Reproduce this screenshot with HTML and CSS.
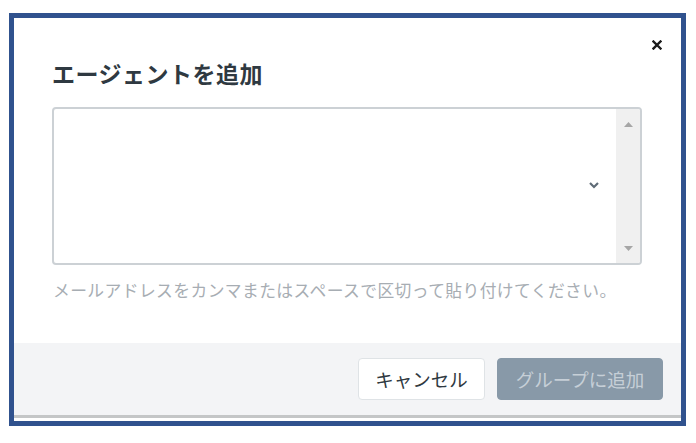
FILE: index.html
```html
<!DOCTYPE html>
<html lang="ja">
<head>
<meta charset="utf-8">
<link rel="stylesheet" href="styles.css">
</head>
<body>
<div class="frame">
  <div class="dialog">
    <button class="close" aria-label="close">
      <svg width="10" height="10" viewBox="0 0 10 10"><path d="M1.5 1.5 L8.5 8.5 M8.5 1.5 L1.5 8.5" stroke="#1a1a1a" stroke-width="2.4" stroke-linecap="square"/></svg>
    </button>
    <div class="body">
      <h1 class="title">エージェントを追加</h1>
      <div class="field">
        <div class="field-main">
          <svg class="chevron" width="12" height="8" viewBox="0 0 12 8"><path d="M2 2 L6 6 L10 2" fill="none" stroke="#5f6b76" stroke-width="2.2"/></svg>
        </div>
        <div class="scrollbar">
          <svg width="9" height="6" viewBox="0 0 9 6"><path d="M0 6 L4.5 1 L9 6 Z" fill="#a6a6a6"/></svg>
          <svg width="9" height="6" viewBox="0 0 9 6"><path d="M0 0 L4.5 5 L9 0 Z" fill="#a6a6a6"/></svg>
        </div>
      </div>
      <p class="hint">メールアドレスをカンマまたはスペースで区切って貼り付けてください。</p>
    </div>
    <div class="footer">
      <button class="btn btn-cancel">キャンセル</button>
      <button class="btn btn-add">グループに追加</button>
    </div>
    <div class="footer-line"></div>
  </div>
</div>
</body>
</html>
```

FILE: styles.css
```css
html, body {
  margin: 0;
  padding: 0;
  background: #ffffff;
  font-family: "Noto Sans CJK JP", "Noto Sans", sans-serif;
}

.frame {
  margin: 13px 0 0 9px;
  width: 667px;
  height: 403px;
  border: 5px solid #30528e;
  background: #ffffff;
}

.dialog {
  position: relative;
  display: flex;
  flex-direction: column;
  height: 100%;
}

.close {
  position: absolute;
  top: 21px;
  right: 18px;
  width: 12px;
  height: 12px;
  padding: 0;
  border: 0;
  background: none;
  display: flex;
  align-items: center;
  justify-content: center;
}

.body {
  height: 325px;
  box-sizing: border-box;
  padding: 40px 0 0 38px;
}

.title {
  margin: 0;
  font-size: 23px;
  line-height: 30px;
  font-weight: 700;
  color: #2f3941;
  letter-spacing: 0.5px;
}

.field {
  margin-top: 19px;
  width: 590px;
  height: 158px;
  box-sizing: border-box;
  border: 2px solid #ccd1d5;
  border-radius: 4px;
  display: flex;
  overflow: hidden;
}

.field-main {
  flex: 1;
  display: flex;
  align-items: center;
  justify-content: flex-end;
  padding-right: 16px;
  padding-bottom: 2px;
}

.scrollbar {
  width: 24px;
  background: #f0f0f0;
  display: flex;
  flex-direction: column;
  justify-content: space-between;
  align-items: center;
  padding: 12px 0 11px;
}

.hint {
  margin: 15px 0 0 1px;
  font-size: 16.8px;
  line-height: 20px;
  letter-spacing: 0.4px;
  color: #a7adb3;
}

.footer {
  height: 72px;
  background: #f3f4f6;
  display: flex;
  justify-content: flex-end;
  align-items: center;
  gap: 12px;
  padding-right: 18px;
}

.footer-line {
  height: 3px;
  background: #c4c6c7;
  margin-bottom: 3px;
}

.btn {
  height: 42px;
  border-radius: 4px;
  font-family: "Noto Sans CJK JP", "Noto Sans", sans-serif;
  font-size: 18.5px;
  padding: 0;
}

.btn-cancel {
  width: 127px;
  background: #ffffff;
  border: 1px solid #dfe3e6;
  color: #2f3941;
}

.btn-add {
  width: 166px;
  background: #8899a8;
  border: 1px solid #8899a8;
  color: #c6cfd7;
}
```
